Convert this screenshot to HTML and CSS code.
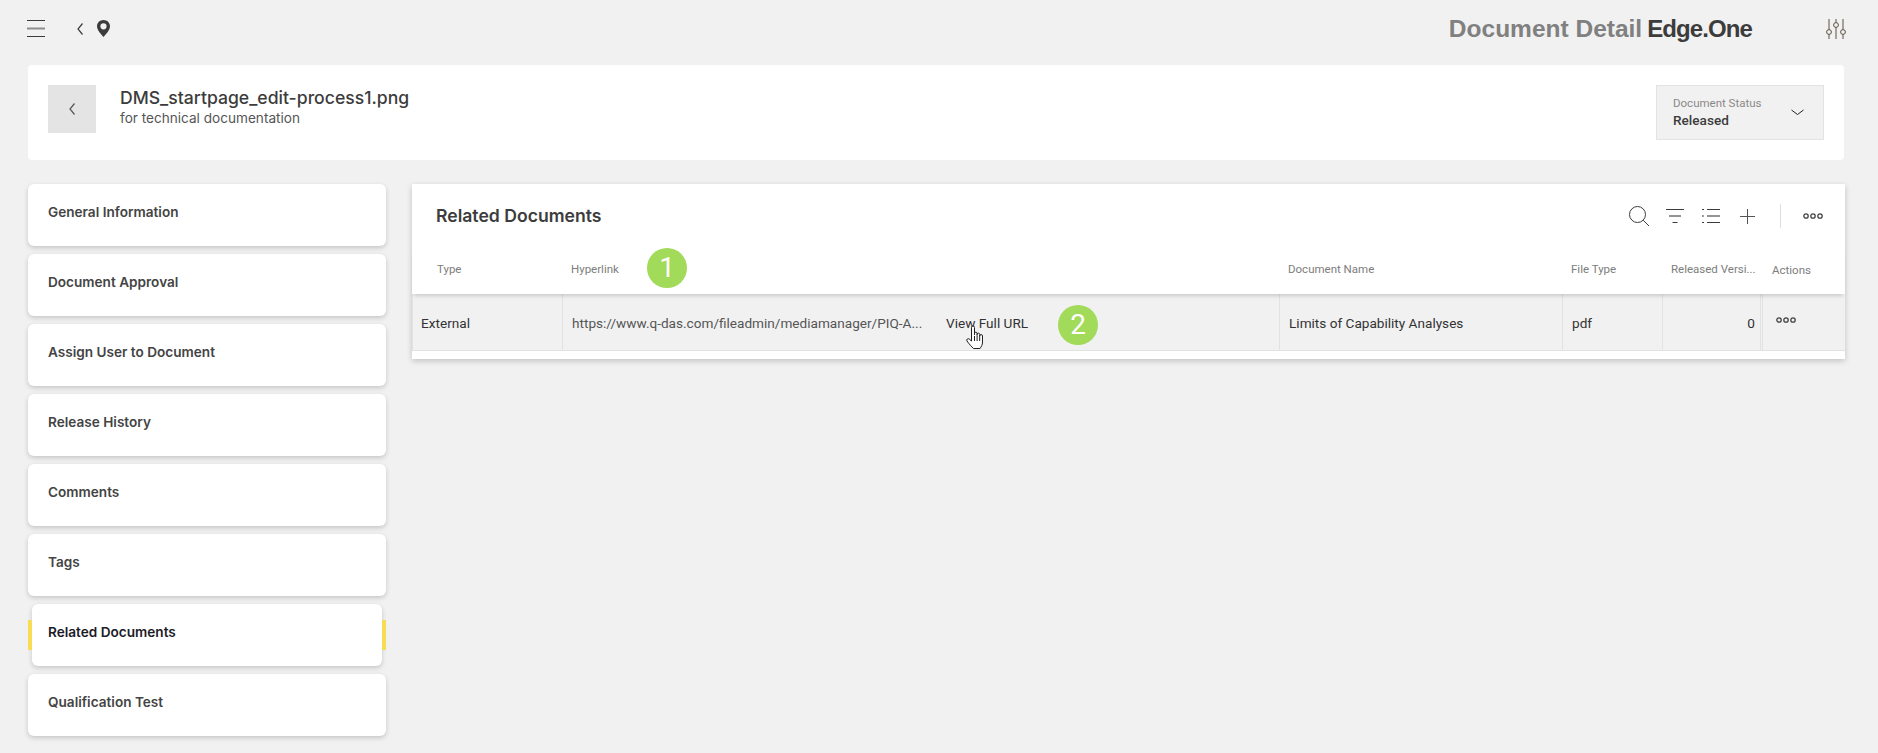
FILE: index.html
```html
<!DOCTYPE html>
<html lang="en">
<head>
<meta charset="utf-8">
<title>Document Detail</title>
<link rel="stylesheet" href="styles.css">
</head>
<body>
<header class="topbar">
  <div class="top-left">
    <svg class="ic-menu" width="18" height="17" viewBox="0 0 18 17"><path d="M0 .5h18M0 16.500h18"/><path class="mid" d="M0 8.500h18"/></svg>
    <svg class="ic-back" width="6" height="12" viewBox="0 0 6 12"><path d="M5.500.5 1 6l4.500 5.500"/></svg>
    <svg class="ic-pin" width="13" height="17" viewBox="0 0 13 17"><path fill-rule="evenodd" d="M6.500 0C2.900 0 0 2.800 0 6.300c0 3.900 4.300 8.200 6.500 10.700C8.700 14.500 13 10.200 13 6.300 13 2.800 10.100 0 6.500 0Zm0 3.200a3.100 3.100 0 1 1 0 6.200 3.100 3.100 0 0 1 0-6.200Z"/></svg>
  </div>
  <div class="top-right">
    <span class="page-title">Document Detail</span>
    <span class="brand">Edge.One</span>
    <svg class="ic-sliders" width="20" height="20" viewBox="0 0 20 20"><path d="M3 0v10.500M3 15.500V20M10 0v3.500M10 8.500V20M17 0v10.500M17 15.500V20"/><circle cx="3" cy="13" r="2.400"/><circle cx="10" cy="6" r="2.400"/><circle cx="17" cy="13" r="2.400"/></svg>
  </div>
</header>

<section class="doc-head">
  <div class="doc-id">
    <button class="back-btn" type="button"><svg width="6" height="12" viewBox="0 0 6 12"><path d="M5.500.5 1 6l4.500 5.500"/></svg></button>
    <div class="doc-text">
      <div class="doc-name">DMS_startpage_edit-process1.png</div>
      <div class="doc-sub">for technical documentation</div>
    </div>
  </div>
  <div class="status">
    <div>
      <div class="status-label">Document Status</div>
      <div class="status-value">Released</div>
    </div>
    <svg width="13" height="7" viewBox="0 0 13 7"><path d="M.5 1 6.500 5.500 12.500 1"/></svg>
  </div>
</section>

<div class="content">
  <nav class="side">
    <a class="side-item">General Information</a>
    <a class="side-item">Document Approval</a>
    <a class="side-item">Assign User to Document</a>
    <a class="side-item">Release History</a>
    <a class="side-item">Comments</a>
    <a class="side-item">Tags</a>
    <a class="side-item active">Related Documents</a>
    <a class="side-item">Qualification Test</a>
  </nav>

  <main class="panel">
    <div class="panel-head">
      <h2>Related Documents</h2>
      <div class="tools">
        <svg class="t-search" width="20" height="20" viewBox="0 0 20 20"><circle cx="8.500" cy="8.500" r="8"/><path d="M14.200 14.200 20 20"/></svg>
        <svg class="t-filter" width="18" height="14" viewBox="0 0 18 14"><path d="M0 .5h18"/><path class="mid" d="M3 7h12"/><path d="M6.500 13.500h5"/></svg>
        <svg class="t-list" width="18" height="14" viewBox="0 0 18 14"><path d="M5 .5h13"/><path class="mid" d="M5 7h13"/><path d="M5 13.500h13M0 .5h2M0 7h2M0 13.500h2"/></svg>
        <svg class="t-plus" width="15" height="15" viewBox="0 0 15 15"><path d="M7.500 0v15M0 7.500h15"/></svg>
        <span class="t-sep"></span>
        <svg class="dots" width="20" height="6" viewBox="0 0 20 6"><circle cx="3" cy="3" r="2.200"/><circle cx="10" cy="3" r="2.200"/><circle cx="17" cy="3" r="2.200"/></svg>
      </div>
    </div>
    <div class="thead grid">
      <div class="th first">Type</div>
      <div class="th">Hyperlink</div>
      <div class="th">Document Name</div>
      <div class="th">File Type</div>
      <div class="th">Released Versi...</div>
      <div class="th last">Actions</div>
    </div>
    <div class="trow grid">
      <div class="td first">External</div>
      <div class="td link"><span class="url">https://www.q-das.com/fileadmin/mediamanager/PIQ-A...</span><span class="view">View Full URL</span></div>
      <div class="td">Limits of Capability Analyses</div>
      <div class="td">pdf</div>
      <div class="td num">0</div>
      <div class="td act"><svg class="dots" width="20" height="6" viewBox="0 0 20 6"><circle cx="3" cy="3" r="2.200"/><circle cx="10" cy="3" r="2.200"/><circle cx="17" cy="3" r="2.200"/></svg></div>
    </div>
    <span class="badge b1">1</span>
    <span class="badge b2">2</span>
    <svg class="hand" width="18" height="24" viewBox="0 0 18 24"><path d="M5.500 14V2.500a1.500 1.500 0 0 1 3 0V10V8.500a1.300 1.300 0 0 1 2.600 0V10.500V9.500a1.300 1.300 0 0 1 2.600 0V11a1.300 1.300 0 0 1 2.800 0v6c0 3-1.200 4.500-2.500 6.500H7.500C5.500 21.500 3 19 1 16c-.9-1.500.8-3 2.200-2l2.300 2Z"/><path d="M8.500 11v5M11.100 11v5M13.700 11v5"/></svg>
  </main>
</div>
</body>
</html>
```

FILE: styles.css
```css
* { box-sizing: border-box; }
html, body { margin: 0; height: 100%; overflow: hidden; }
body { width: 1878px; height: 753px; padding: 0 34px 0 28px; background: #f1f1f1; font-family: Inter, "Noto Sans", sans-serif; color: #3c3c3c; }
svg { display: block; fill: none; stroke: #3c3c3c; stroke-width: 1; }
.mid { stroke-width: 2; opacity: .55; }

.topbar { height: 65px; display: flex; justify-content: space-between; align-items: flex-start; }
.top-left { display: flex; align-items: center; padding-top: 20px; margin-left: -1px; }
.ic-menu { margin-right: 32px; }
.ic-back { margin-right: 14px; stroke-width: 1.2; }
.ic-pin { fill: #3c3c3c; stroke: none; }
.top-right { display: flex; align-items: center; padding-top: 17px; margin-right: -2px; }
.page-title { font: 700 24.500px/24px "Liberation Sans", Arial, sans-serif; color: #808080; }
.brand { font: 700 24px/24px "Liberation Sans", Arial, sans-serif; color: #3c3c3c; margin-left: 5px; letter-spacing: -.9px; }
.ic-sliders { margin-left: 74px; stroke: #5a5040; }

.doc-head { height: 95px; background: #fff; border-radius: 4px; padding: 20px; display: flex; justify-content: space-between; align-items: flex-start; }
.doc-id { display: flex; }
.back-btn { width: 48px; height: 48px; padding: 0; border: 0; background: #e4e4e4; display: flex; align-items: center; justify-content: center; }
.back-btn svg { stroke: #555; stroke-width: 1.2; }
.doc-text { margin-left: 24px; }
.doc-name { font-size: 17.600px; line-height: 20px; font-weight: 500; margin-top: 3px; white-space: nowrap; }
.doc-sub { font-size: 13.600px; line-height: 16px; margin-top: 2px; color: #555; }
.status { width: 168px; height: 55px; background: #f1f1f1; border: 1px solid #e3e3e3; padding: 10px 19px 0 16px; display: flex; justify-content: space-between; align-items: flex-start; font-family: Roboto, sans-serif; }
.status svg { margin-top: 13px; stroke: #222; }
.status-label { font-size: 11.500px; line-height: 14px; color: #8a8a8a; }
.status-value { font-size: 13.600px; line-height: 16px; font-weight: 500; margin-top: 2px; color: #3c3c3c; }

.content { display: flex; gap: 26px; margin-top: 24px; align-items: flex-start; }
.side { width: 358px; display: flex; flex-direction: column; gap: 8px; flex: none; }
.side-item { position: relative; display: block; height: 62px; padding: 20px 20px 0; background: #fff; border-radius: 6px; box-shadow: 0 2px 5px rgba(0,0,0,.18); font-size: 13.600px; line-height: 16px; font-weight: 600; color: #444; }
.side-item.active { margin: 0 4px; padding-left: 16px; color: #1c1c28; }
.side-item.active::before, .side-item.active::after { content: ""; position: absolute; top: 16px; width: 4px; height: 30px; background: #f8dc55; }
.side-item.active::before { left: -4px; }
.side-item.active::after { right: -4px; }

.panel { position: relative; flex: 1; height: 175px; background: #fff; box-shadow: 0 2px 6px rgba(0,0,0,.2); }
.panel-head { height: 64px; display: flex; justify-content: space-between; padding: 22px 22px 0 24px; }
.panel-head h2 { margin: 0; font-size: 17.600px; line-height: 20px; font-weight: 600; color: #3c3c3c; }
.tools { display: flex; align-items: center; height: 24px; margin-top: -2px; }
.t-search { margin-right: 17px; }
.t-filter { margin-right: 18px; }
.t-list { margin-right: 20px; }
.t-plus { stroke: #555; margin-right: 25px; }
.t-sep { width: 1px; height: 24px; background: #ddd; margin-right: 22px; }
.dots { stroke: #444; stroke-width: 1.3; }

.grid { display: grid; grid-template-columns: 150px 717px 283px 100px 100px 82px; }
.thead { height: 46px; position: relative; z-index: 1; background: #fff; box-shadow: 0 4px 4px -2px rgba(0,0,0,.16); }
.th { font: 400 11.500px/14px Roboto, sans-serif; color: #7d7d7d; padding: 14px 0 0 9px; }
.th.first { padding-left: 25px; }
.th.last { padding-left: 10px; padding-top: 15px; }
.trow { height: 57px; background: #f1f1f1; border-bottom: 1px solid #e2e2e2; border-left: 1px solid #e2e2e2; }
.td { font: 400 13.600px/16px Roboto, sans-serif; color: #333; padding: 21px 0 0 9px; border-right: 1px solid #e2e2e2; white-space: nowrap; }
.td.first { padding-left: 8px; }
.td.link { color: #555; display: flex; }
.url { width: 374px; }
.view { color: #333; }
.td.num { text-align: right; padding-right: 5px; border-right-width: 3px; border-right-style: double; }
.td.act { border-right: 0; padding: 23px 0 0 13px; }

.badge { position: absolute; z-index: 2; width: 40px; height: 40px; border-radius: 50%; background: #a2da5a; color: #fff; font: 400 28px/40px Roboto, sans-serif; text-align: center; }
.b1 { left: 235px; top: 64px; }
.b2 { left: 646px; top: 121px; }
.hand { position: absolute; z-index: 2; left: 554px; top: 141px; fill: #fff; stroke: #222; }
```
